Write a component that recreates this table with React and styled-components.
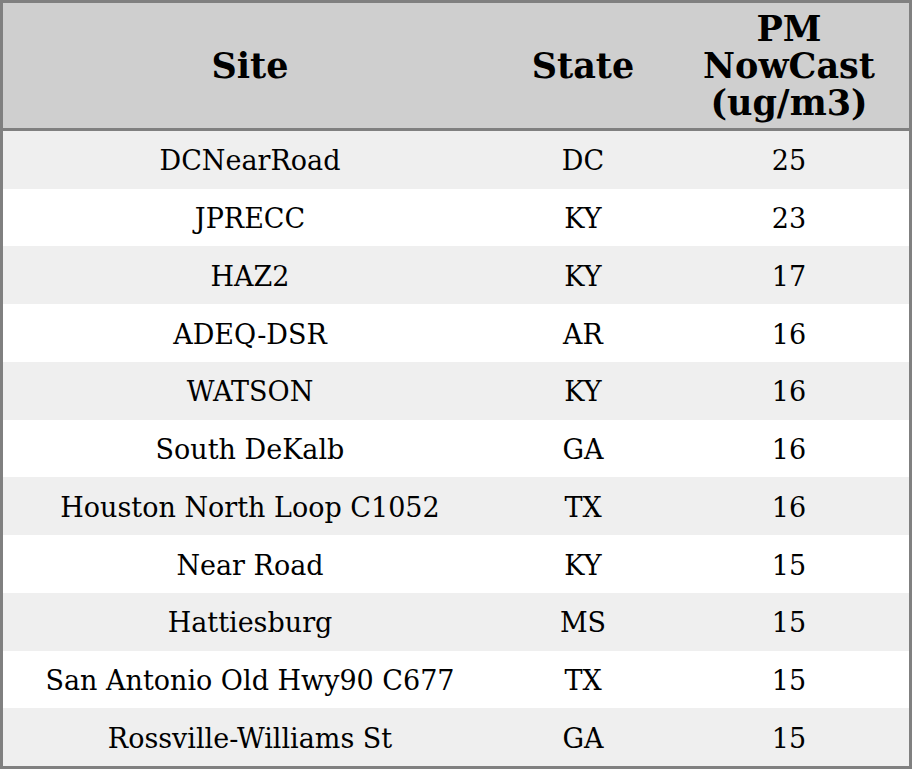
import React from "react";
import styled, { createGlobalStyle } from "styled-components";

const Global = createGlobalStyle`
  html, body { margin: 0; padding: 0; background: #ffffff; }
  body { font-family: "DejaVu Serif", serif; }
  * { box-sizing: border-box; }
`;

const Table = styled.div`
  width: 912px;
  height: 769px;
  border: 3px solid #808080;
  display: flex;
  flex-direction: column;
  font-family: "DejaVu Serif", serif;
  color: #000;
`;

const cols = "494px 172px 240px";

const HeadRow = styled.div`
  display: grid;
  grid-template-columns: ${cols};
  height: 128px;
  flex: none;
  background: #cfcfcf;
  border-bottom: 3px solid #808080;
`;

const HeadCell = styled.div`
  display: flex;
  align-items: center;
  justify-content: center;
  text-align: center;
  font-size: 35px;
  font-weight: bold;
  line-height: 37px;
`;

const Row = styled.div`
  display: grid;
  grid-template-columns: ${cols};
  flex: 1;
  background: ${(p) => (p.$alt ? "#efefef" : "#ffffff")};
`;

const Cell = styled.div`
  display: flex;
  align-items: center;
  justify-content: center;
  padding-top: 2px;
  font-size: 27px;
  white-space: nowrap;
`;

const data = [
  ["DCNearRoad", "DC", 25],
  ["JPRECC", "KY", 23],
  ["HAZ2", "KY", 17],
  ["ADEQ-DSR", "AR", 16],
  ["WATSON", "KY", 16],
  ["South DeKalb", "GA", 16],
  ["Houston North Loop C1052", "TX", 16],
  ["Near Road", "KY", 15],
  ["Hattiesburg", "MS", 15],
  ["San Antonio Old Hwy90 C677", "TX", 15],
  ["Rossville-Williams St", "GA", 15],
];

export default function App() {
  return (
    <>
      <Global />
      <Table>
        <HeadRow>
          <HeadCell>Site</HeadCell>
          <HeadCell>State</HeadCell>
          <HeadCell>
            PM
            <br />
            NowCast
            <br />
            (ug/m3)
          </HeadCell>
        </HeadRow>
        {data.map((r, i) => (
          <Row key={i} $alt={i % 2 === 0}>
            <Cell>{r[0]}</Cell>
            <Cell>{r[1]}</Cell>
            <Cell>{r[2]}</Cell>
          </Row>
        ))}
      </Table>
    </>
  );
}
